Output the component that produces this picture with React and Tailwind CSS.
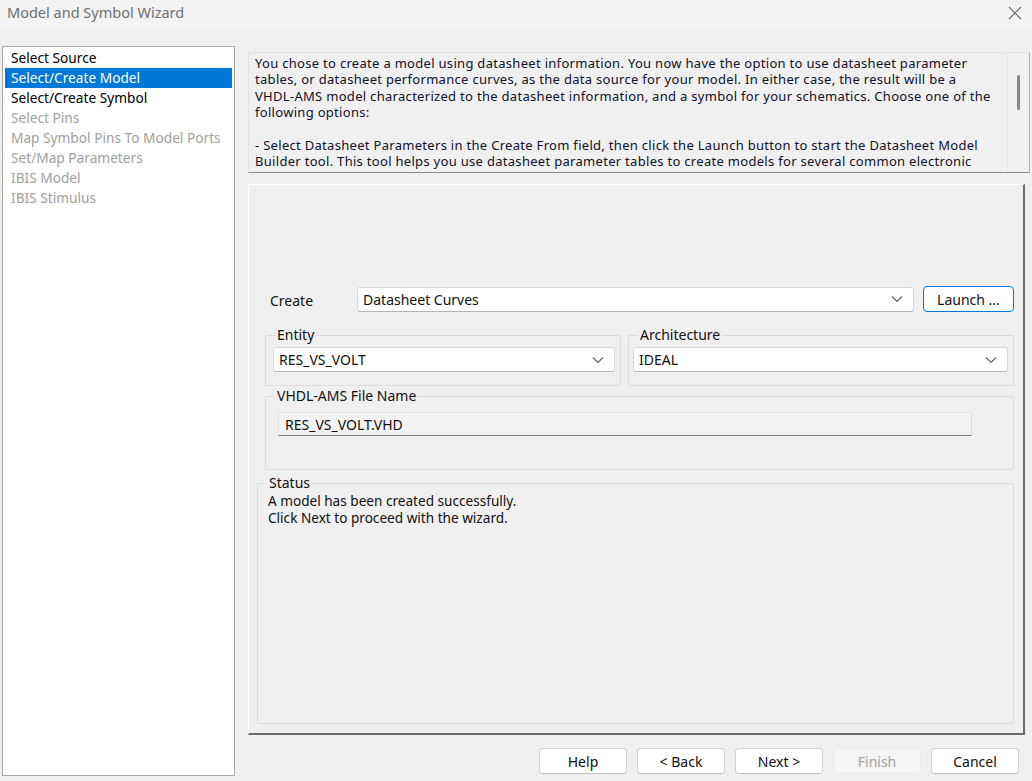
import { useState } from 'react'

const steps = [
  { label: 'Select Source', state: 'done' },
  { label: 'Select/Create Model', state: 'active' },
  { label: 'Select/Create Symbol', state: 'done' },
  { label: 'Select Pins', state: 'off' },
  { label: 'Map Symbol Pins To Model Ports', state: 'off' },
  { label: 'Set/Map Parameters', state: 'off' },
  { label: 'IBIS Model', state: 'off' },
  { label: 'IBIS Stimulus', state: 'off' },
]

// only the lines that show in the box; the rest scrolls
const intro = [
  'You chose to create a model using datasheet information. You now have the option to use datasheet parameter',
  'tables, or datasheet performance curves, as the data source for your model. In either case, the result will be a',
  'VHDL-AMS model characterized to the datasheet information, and a symbol for your schematics. Choose one of the',
  'following options:',
  '',
  '- Select Datasheet Parameters in the Create From field, then click the Launch button to start the Datasheet Model',
  'Builder tool. This tool helps you use datasheet parameter tables to create models for several common electronic',
]

function Chevron() {
  return (
    <svg width="12" height="8" viewBox="0 0 12 8" className="shrink-0">
      <path d="M1 1.5 L6 6.5 L11 1.5" fill="none" stroke="#606060" strokeWidth="1.1" />
    </svg>
  )
}

function Combo({ value, className }) {
  return (
    <div className={`flex items-center justify-between h-[25px] bg-white border border-[#d9d9d9] border-b-[#b5b5b5] rounded-[3px] pl-[5px] pr-[10px] ${className}`}>
      <span className="text-[14px] text-[#111]">{value}</span>
      <Chevron />
    </div>
  )
}

function Group({ title, className, children }) {
  return (
    <div className={`flex flex-col border border-[#dcdcdc] rounded-[2px] ${className}`}>
      <span className="self-start -mt-[10px] ml-[9px] px-[2px] bg-[#f0f0f0] text-[14px] leading-[18px] text-[#111]">{title}</span>
      {children}
    </div>
  )
}

function Btn({ children, disabled }) {
  return (
    <button
      className={`w-[88px] h-[26px] rounded-[4px] text-[14px] ${
        disabled
          ? 'bg-[#f5f5f5] border border-[#ebebeb] text-[#a3a3a3]'
          : 'bg-white border border-[#d0d0d0] border-b-[#c2c2c2] text-[#111]'
      }`}
    >
      {children}
    </button>
  )
}

export default function App() {
  const [active] = useState(1)

  return (
    <div
      className="w-[1032px] h-[781px] bg-[#f0f0f0] flex flex-col overflow-hidden select-none"
      style={{ fontFamily: "'Noto Sans', 'Open Sans', sans-serif" }}
    >
      {/* title bar */}
      <div className="h-[29px] shrink-0 flex items-center justify-between pl-[7px] pr-[10px] bg-[#f3f3f3]">
        <span className="text-[14.5px] text-[#707070] -mt-[4px]">Model and Symbol Wizard</span>
        <svg width="14" height="14" viewBox="0 0 14 14" className="-mt-[4px]">
          <path d="M1 1 L13 13 M13 1 L1 13" stroke="#6a6a6a" strokeWidth="1.1" />
        </svg>
      </div>

      <div className="flex flex-1">
        {/* step list */}
        <div className="ml-[2px] mt-[17px] w-[233px] h-[730px] bg-white border border-[#a6a8ad] p-[2px] pt-[1px] shrink-0">
          {steps.map((s, i) => (
            <div
              key={s.label}
              className={`h-[20px] flex items-center pl-[6px] text-[13.7px] whitespace-nowrap ${
                i === active
                  ? 'bg-[#0078d7] text-white'
                  : s.state === 'off'
                  ? 'text-[#a0a0a0]'
                  : 'text-[#000]'
              }`}
            >
              {s.label}
            </div>
          ))}
        </div>

        {/* right column */}
        <div className="ml-[13px] flex flex-col w-[782px]">
          {/* intro text */}
          <div className="mt-[23px] h-[121px] flex border border-[#e3e3e3] border-b-[#8a8a8a] border-r-[#b0b0b0] bg-[#f0f0f0] overflow-hidden">
            <div className="flex-1 pl-[6px] pt-[2px] overflow-hidden">
              {intro.map((l, i) => (
                <div key={i} className="h-[16.4px] leading-[16.4px] text-[13px] tracking-[0.3px] text-[#10102a] whitespace-nowrap">
                  {l || '\u00a0'}
                </div>
              ))}
            </div>
            <div className="w-[22px] border-l border-[#e6e6e6] flex justify-center pt-[22px]">
              <div className="w-[3px] h-[35px] rounded-full bg-[#868686]" />
            </div>
          </div>

          {/* form panel */}
          <div className="mt-[11px] w-[777px] h-[551px] border-t border-l border-[#ffffff] border-r-2 border-b-2 border-r-[#6e6e6e] border-b-[#6e6e6e] flex flex-col">
            <div className="mt-[101px] flex items-center h-[26px]">
              <span className="ml-[21px] w-[87px] text-[14px] text-[#111] mt-[2px]">Create</span>
              <Combo value="Datasheet Curves" className="w-[557px]" />
              <button className="ml-[9px] w-[91px] h-[26px] bg-white border border-[#0078d7] rounded-[4px] text-[14px] text-[#111]">
                Launch ...
              </button>
            </div>

            <div className="mt-[23px] flex ml-[16px] gap-[7px]">
              <Group title="Entity" className="w-[356px] h-[51px]">
                <Combo value="RES_VS_VOLT" className="ml-[7px] mt-[3px] w-[342px]" />
              </Group>
              <Group title="Architecture" className="w-[386px] h-[51px]">
                <Combo value="IDEAL" className="ml-[4px] mt-[3px] w-[375px]" />
              </Group>
            </div>

            <Group title="VHDL-AMS File Name" className="mt-[10px] ml-[16px] w-[749px] h-[74px]">
              <div className="ml-[12px] mt-[7px] w-[694px] h-[24px] flex items-center pl-[6px] bg-[#f3f3f3] border border-[#e4e4e4] border-b-[#7a7a7a] border-r-[#dadada] text-[14px] text-[#111]">
                RES_VS_VOLT.VHD
              </div>
            </Group>

            <Group title="Status" className="mt-[13px] ml-[8px] w-[757px] h-[241px]">
              <div className="ml-[10px] text-[13.6px] leading-[17px] text-[#111]">
                <div>A model has been created successfully.</div>
                <div>Click Next to proceed with the wizard.</div>
              </div>
            </Group>
          </div>

          {/* buttons */}
          <div className="mt-[13px] flex gap-[10px] justify-end pr-[11px]">
            <Btn>Help</Btn>
            <Btn>&lt; Back</Btn>
            <Btn>Next &gt;</Btn>
            <Btn disabled>Finish</Btn>
            <Btn>Cancel</Btn>
          </div>
        </div>
      </div>
    </div>
  )
}
